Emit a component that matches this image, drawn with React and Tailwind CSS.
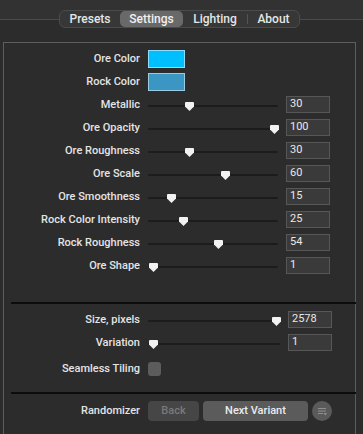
import React from "react";

const font = { fontFamily: "Roboto, 'Liberation Sans', Arial, sans-serif" };

function Thumb() {
  return (
    <svg width="11" height="11" viewBox="0 0 11 11">
      <path d="M2 1 H9 Q10 1 10 2 V5.5 L5.5 10 L1 5.5 V2 Q1 1 2 1 Z" fill="#f2f2f2" />
    </svg>
  );
}

function Label({ children }) {
  return (
    <div className="w-[136px] shrink-0 text-right text-[11px] font-medium leading-none text-[#e4e4e4] mb-[1px]">
      {children}
    </div>
  );
}

function SliderRow({ label, value, pos, wide }) {
  const w = wide ? 132 : 130;
  const left = 5 + pos * (w - 9) - 5.5;
  return (
    <div className="flex h-[23px] items-center">
      <Label>{label}</Label>
      <div className={`relative ml-[8px] h-[23px] shrink-0 ${wide ? "w-[132px]" : "w-[130px]"}`}>
        <div className="absolute left-0 right-0 top-[12px] h-[2px] rounded-full bg-[#1c1c1c]" />
        <div className="absolute top-[8px]" style={{ left: `${left}px` }}>
          <Thumb />
        </div>
      </div>
      <div className="ml-[8px] flex h-[17px] w-[44px] shrink-0 items-center border border-[#575757] bg-[#3a3a3a] pl-[3px] text-[11px] text-[#e8e8e8]">
        {value}
      </div>
    </div>
  );
}

function ColorRow({ label, color, border }) {
  return (
    <div className="flex h-[23px] items-center">
      <Label>{label}</Label>
      <div className={`ml-[8px] h-[18px] w-[37px] border ${color} ${border}`} />
    </div>
  );
}

export default function App() {
  const rows = [
    ["Metallic", "30", 0.3],
    ["Ore Opacity", "100", 1],
    ["Ore Roughness", "30", 0.3],
    ["Ore Scale", "60", 0.6],
    ["Ore Smoothness", "15", 0.15],
    ["Rock Color Intensity", "25", 0.25],
    ["Rock Roughness", "54", 0.54],
    ["Ore Shape", "1", 0],
  ];
  return (
    <div className="h-[434px] w-[363px] overflow-hidden bg-[#2c2c2c]" style={font}>
      <div className="h-[42px] bg-[linear-gradient(to_bottom,#323232_0px,#323232_19px,#4a4a4a_19px,#4a4a4a_20px,#2c2c2c_20px)] pt-[10px]">
        <div className="ml-[59px] flex h-[18px] w-[241px] items-center rounded-[6px] border border-[#4b4b4b] bg-[#373737] text-[12px] font-medium text-[#e6e6e6]">
          <div className="flex h-full w-[60px] items-center justify-center">Presets</div>
          <div className="flex h-full w-[63px] items-center justify-center rounded-[5px] bg-[#696969] text-[#f0f0f0]">Settings</div>
          <div className="flex h-full w-[64px] items-center justify-center">Lighting</div>
          <div className="h-[10px] w-px bg-[#555555]" />
          <div className="flex h-full w-[51px] items-center justify-center">About</div>
        </div>
      </div>
      <div className="ml-[3px] h-[420px] w-[353px] border border-[#5e5e5e] pt-[4px]">
        <ColorRow label="Ore Color" color="bg-[#00bfff]" border="border-[#8fdcfb]" />
        <ColorRow label="Rock Color" color="bg-[#3b96c3]" border="border-[#9ccbe0]" />
        {rows.map(([l, v, p]) => (
          <SliderRow key={l} label={l} value={v} pos={p} />
        ))}
        <div className="ml-[7px] mr-[-1px] mt-[25px] h-[2px] bg-[#0c0c0c]" />
        <div className="mt-[4px]">
          <SliderRow label="Size, pixels" value="2578" pos={1} wide />
          <SliderRow label="Variation" value="1" pos={0} wide />
        </div>
        <div className="flex h-[29px] items-center">
          <Label>Seamless Tiling</Label>
          <div className="ml-[8px] h-[14px] w-[13px] rounded-[3px] bg-[#5c5c5c]" />
        </div>
        <div className="ml-[7px] mr-[-1px] mt-[9px] h-[2px] bg-[#0c0c0c]" />
        <div className="mt-[7px] flex h-[20px] items-center">
          <Label>Randomizer</Label>
          <div className="ml-[8px] flex h-[20px] w-[51px] items-center justify-center rounded-[4px] bg-[#464646] text-[11px] font-medium text-[#7a7a7a]">
            Back
          </div>
          <div className="ml-[4px] flex h-[20px] w-[105px] items-center justify-center rounded-[4px] bg-[#5b5b5b] text-[11px] font-medium text-[#ececec]">
            Next Variant
          </div>
          <div className="ml-[4px] flex h-[20px] w-[20px] items-center justify-center rounded-full bg-[#5a5a5a]">
            <svg width="12" height="12" viewBox="0 0 12 12">
              <path d="M2 3.5 H10 M2 6 H10 M2 8.5 H7" stroke="#8f8f8f" strokeWidth="1" />
              <path d="M7.5 8 H11 L9.25 10.5 Z" fill="#8f8f8f" />
            </svg>
          </div>
        </div>
      </div>
    </div>
  );
}
